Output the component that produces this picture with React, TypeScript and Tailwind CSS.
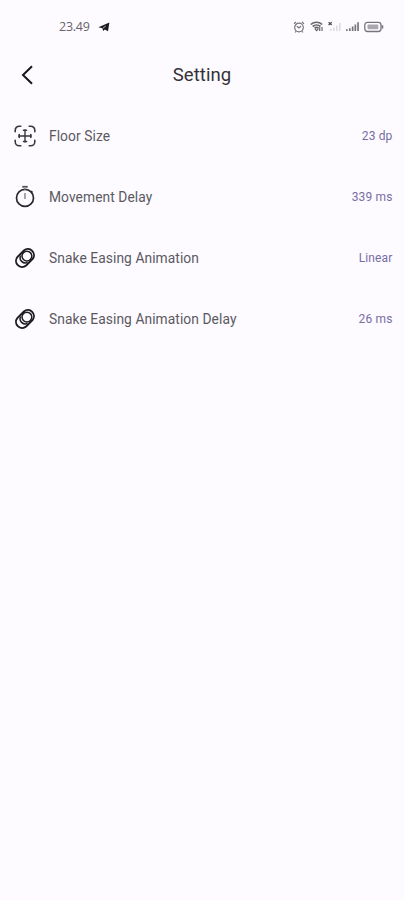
import type { ReactNode } from "react";

function StatusBar() {
  return (
    <div className="flex h-[52px] items-center pl-[59px] pr-[20px] text-[#66646a]">
      <span className="mt-[1px] font-['Open_Sans','Noto_Sans',sans-serif] text-[12.5px] leading-4 tracking-[-0.25px]">23.49</span>
      <svg className="ml-[8px] mt-[2px]" width="12" height="10" viewBox="0 0 12 10">
        <path d="M.4 5.2 11.4.5 10 9.2 6.8 7.6 5.2 9 4.4 6.2Z" fill="#19181b" />
        <path d="m4.8 6.2 3-2.2" stroke="#fdfbff" strokeWidth=".7" />
      </svg>
      <div className="ml-auto mt-[1px] flex items-center">
        <svg width="12" height="12" viewBox="0 0 12 12" fill="none" stroke="#77757b" strokeWidth="1.2">
          <circle cx="6" cy="6.5" r="4.3" />
          <path d="M1 2.7 3 1M11 2.7 9 1M3.8 5.3 6 7l2-2M3 10.3l-1 1M9 10.3l1 1" />
        </svg>
        <svg className="ml-[5px]" width="14" height="11" viewBox="0 0 14 11" fill="none" stroke="#68666c" strokeWidth="1.7">
          <path d="M.8 3.5C4 .5 9 .5 12.2 3.5M2.7 5.5c2.2-2 5.6-2 7.8 0M4.6 7.3c1.1-1 2.9-1 4 0" />
          <path d="m5 7.8 1.6 1.9L8.3 8M9.7 10V6.3M12 6v4" strokeWidth="1.2" />
        </svg>
        <svg className="ml-[4px]" width="14" height="11" viewBox="0 0 14 11">
          <path d="M.6 1.2 3.7 4M3.7 1.2.6 4" stroke="#4d4b51" strokeWidth="1.2" />
          <path d="M2 8h1.6v2H2zM5 6.5h1.6V10H5zM8 4.5h1.6V10H8zM11 2h1.6v8H11z" fill="#dedce1" />
        </svg>
        <svg className="ml-[4px]" width="13" height="11" viewBox="0 0 13 11" fill="#77757b">
          <path d="M0 8.3h1.7V10H0zM3 7.2h1.7V10H3zM5.8 5.5h1.7V10H5.8zM8.5 3.5h1.7V10H8.5zM11.2 1.2h1.7V10h-1.7z" />
        </svg>
        <svg className="ml-[5px]" width="20" height="12" viewBox="0 0 20 12">
          <rect x=".8" y="1.3" width="16.2" height="9.2" rx="2.7" fill="none" stroke="#77757b" strokeWidth="1.3" />
          <rect x="3.5" y="3.5" width="10.8" height="4.8" rx="1" fill="#aaa7ae" />
          <path d="M18.5 4.2v3.4" stroke="#77757b" strokeWidth="1.5" />
        </svg>
      </div>
    </div>
  );
}

function FloorIcon() {
  return (
    <svg width="24" height="24" viewBox="0 0 24 24" fill="none" stroke="#39373c" strokeWidth="1.6" strokeLinecap="round">
      <path d="M2.2 7.7V6.2a4 4 0 0 1 4-4h1.6M16.2 2.2h1.6a4 4 0 0 1 4 4v1.5M21.8 16.3v1.5a4 4 0 0 1-4 4h-1.6M7.8 21.8H6.2a4 4 0 0 1-4-4v-1.5" />
      <path d="M12 6v12M5.8 12h12.4" strokeWidth="1.4" />
      <path d="M10.5 6.3h3M10.5 17.5h3M6.2 10.5v3M17.8 10.5v3" strokeWidth="1.6" />
    </svg>
  );
}

function TimerIcon() {
  return (
    <svg width="24" height="24" viewBox="0 0 24 24" fill="none" stroke="#29272c" strokeWidth="1.7">
      <circle cx="12" cy="12.9" r="8.5" />
      <path d="m18 6.2 1.4 1.4" strokeWidth="1.8" />
      <path d="M9.3 1.8h5.4" stroke="#55535a" strokeWidth="1.9" />
      <path d="M12 8V14M12 2v2.5" stroke="#99969e" />
    </svg>
  );
}

function MotionIcon() {
  return (
    <svg width="24" height="24" viewBox="0 0 24 24" fill="none" stroke="#1d1b20" strokeWidth="1.9">
      <path d="M10.9 4.5a6.1 6.1 0 0 1 8.6 8.6l-6.4 6.4a6.1 6.1 0 0 1-8.6-8.6Z" />
      <circle cx="13.9" cy="10.1" r="4.9" strokeWidth="1.5" />
      <path d="M7.6 9.5a5.2 5.2 0 0 0 6.9 6.9" strokeWidth="1.5" />
    </svg>
  );
}

function SettingRow({ icon, label, value }: { icon: ReactNode; label: string; value: string }) {
  return (
    <div className="flex h-[61px] items-center pl-[13px] pr-[11.5px]">
      {icon}
      <span className="ml-[12px] text-[13.8px] leading-5 tracking-[0.07px] text-[#5b595f]">{label}</span>
      <span className="ml-auto text-[12px] leading-4 tracking-[0.15px] text-[#776da6]">{value}</span>
    </div>
  );
}

export default function App() {
  return (
    <main className="h-screen w-full overflow-hidden bg-[#fdfbff] font-[Roboto,sans-serif]">
      <StatusBar />
      <header className="grid h-[46px] grid-cols-[54px_1fr_54px] items-center">
        <svg className="ml-[21px]" width="12" height="20" viewBox="0 0 12 20" fill="none" stroke="#171619" strokeWidth="2">
          <path d="m11 1.2-9 8.8 9 8.8" />
        </svg>
        <h1 className="text-center text-[18.5px] leading-6 tracking-[0.05px] text-[#343237]">Setting</h1>
      </header>
      <section className="mt-[7.5px]">
        <SettingRow icon={<FloorIcon />} label="Floor Size" value="23 dp" />
        <SettingRow icon={<TimerIcon />} label="Movement Delay" value="339 ms" />
        <SettingRow icon={<MotionIcon />} label="Snake Easing Animation" value="Linear" />
        <SettingRow icon={<MotionIcon />} label="Snake Easing Animation Delay" value="26 ms" />
      </section>
    </main>
  );
}
